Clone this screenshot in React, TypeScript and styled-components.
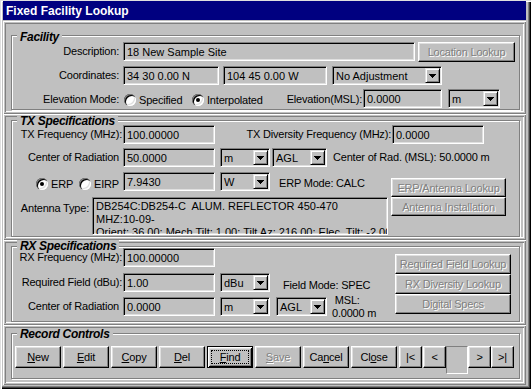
import React from 'react';
import styled, { createGlobalStyle } from 'styled-components';

const GlobalStyle = createGlobalStyle`
  html, body { margin: 0; padding: 0; background: #c0c0c0; }
  body {
    font-family: "Liberation Sans", Arial, sans-serif;
    font-size: 11px;
    color: #000;
  }
  * { box-sizing: border-box; }
`;

const Window = styled.div`
  width: 531px;
  height: 389px;
  background: #c0c0c0;
  padding: 1px 5px 4px 3px;
  display: flex;
  flex-direction: column;
  overflow: hidden;
  box-shadow: inset 1px 1px #dfdfdf, inset 2px 2px #fff, inset -1px -1px #000,
    inset -2px -2px #404040, inset -3px -3px #808080;
`;

const TitleBar = styled.div`
  height: 19px;
  flex-shrink: 0;
  background: #000080;
  color: #fff;
  font-weight: bold;
  font-size: 12px;
  line-height: 17px;
  padding: 2px 0 0 3px;
  white-space: nowrap;
`;

const Body = styled.div`
  display: flex;
  flex-direction: column;
  margin-top: 1px;
`;

const Panel = styled.div<{ $h: number; $pt: number; $pb: number }>`
  height: ${(p) => p.$h}px;
  padding: ${(p) => p.$pt}px 6px ${(p) => p.$pb}px 8px;
  display: flex;
  flex-direction: column;
  flex-shrink: 0;
  box-shadow: inset 1px 1px #fff, inset -1px -1px #808080, inset 2px 2px #c0c0c0,
    inset -2px -2px #c0c0c0, inset 3px 3px #808080, inset -3px -3px #fff;
`;

const GroupBox = styled.div<{ $pt: number }>`
  position: relative;
  flex: 1;
  border: 1px solid #808080;
  box-shadow: inset 1px 1px #fff, 1px 1px #fff;
  padding-top: ${(p) => p.$pt}px;
`;

const Legend = styled.span<{ $top?: number }>`
  position: absolute;
  top: ${(p) => p.$top ?? -6}px;
  left: 5px;
  padding: 0 3px;
  background: #c0c0c0;
  font-weight: bold;
  font-style: italic;
  font-size: 12px;
  line-height: 12px;
  letter-spacing: -0.3px;
  white-space: nowrap;
`;

const Row = styled.div<{ $h?: number; $mt?: number }>`
  display: flex;
  align-items: flex-start;
  height: ${(p) => p.$h ?? 19}px;
  margin-top: ${(p) => p.$mt ?? 0}px;
`;

const Split = styled.div<{ $mt?: number }>`
  display: flex;
  align-items: flex-start;
  margin-top: ${(p) => p.$mt ?? 0}px;
`;

const Column = styled.div<{ $w?: number; $ml?: number; $mt?: number }>`
  display: flex;
  flex-direction: column;
  flex-shrink: 0;
  ${(p) => (p.$w ? `width: ${p.$w}px;` : '')}
  margin-left: ${(p) => p.$ml ?? 0}px;
  margin-top: ${(p) => p.$mt ?? 0}px;
`;

const Label = styled.span<{ $w: number; $ml?: number; $pt?: number }>`
  width: ${(p) => p.$w}px;
  margin-left: ${(p) => p.$ml ?? 0}px;
  padding-top: ${(p) => p.$pt ?? 1}px;
  text-align: right;
  white-space: nowrap;
  line-height: 17px;
  flex-shrink: 0;
  letter-spacing: -0.2px;
`;

const Note = styled.span<{ $ml?: number; $dy?: number }>`
  margin-left: ${(p) => p.$ml ?? 0}px;
  margin-top: ${(p) => p.$dy ?? 0}px;
  padding-top: 1px;
  white-space: nowrap;
  line-height: 17px;
  flex-shrink: 0;
  letter-spacing: -0.2px;
`;

const StackNote = styled.span<{ $ml?: number; $dy?: number }>`
  margin-left: ${(p) => p.$ml ?? 0}px;
  margin-top: ${(p) => p.$dy ?? 0}px;
  display: flex;
  flex-direction: column;
  line-height: 13px;
  white-space: nowrap;
  letter-spacing: -0.2px;
`;

const sunken = `
  border: 1px solid;
  border-color: #808080 #fff #fff #808080;
  box-shadow: inset 1px 1px #000, inset -1px -1px #dfdfdf;
`;

const Field = styled.div<{ $w: number; $h?: number; $ml?: number }>`
  width: ${(p) => p.$w}px;
  height: ${(p) => p.$h ?? 19}px;
  margin-left: ${(p) => p.$ml ?? 0}px;
  flex-shrink: 0;
  background: #c0c0c0;
  ${sunken}
  padding: 1px 2px 0 3px;
  line-height: 17px;
  white-space: nowrap;
  overflow: hidden;
`;

const SelectBox = styled.div<{ $w: number; $ml?: number }>`
  width: ${(p) => p.$w}px;
  height: 19px;
  margin-left: ${(p) => p.$ml ?? 0}px;
  flex-shrink: 0;
  background: #c0c0c0;
  ${sunken}
  display: flex;
  align-items: flex-start;
  padding: 0 0 0 3px;
`;

const SelectText = styled.span`
  flex: 1;
  padding-top: 2px;
  line-height: 15px;
  white-space: nowrap;
  overflow: hidden;
`;

const DropBtn = styled.span`
  width: 15px;
  height: 15px;
  margin: 1px 1px 0 0;
  flex-shrink: 0;
  border: 1px solid;
  border-color: #dfdfdf #000 #000 #dfdfdf;
  box-shadow: inset 1px 1px #fff, inset -1px -1px #808080;
  background: #c0c0c0;
  display: flex;
  align-items: center;
  justify-content: center;
`;

const Memo = styled.div<{ $w: number; $h: number; $ml?: number }>`
  width: ${(p) => p.$w}px;
  height: ${(p) => p.$h}px;
  margin-left: ${(p) => p.$ml ?? 0}px;
  flex-shrink: 0;
  background: #c0c0c0;
  ${sunken}
  padding: 2px 2px 0 3px;
  line-height: 13px;
  overflow: hidden;
  white-space: pre;
`;

const NavField = styled.div<{ $w: number; $h: number }>`
  width: ${(p) => p.$w}px;
  height: ${(p) => p.$h}px;
  flex-shrink: 0;
  background: #c0c0c0;
  border: 1px solid;
  border-color: #808080 #fff #fff #808080;
`;

const Btn = styled.button<{ $w: number; $h: number; $ml?: number; $default?: boolean }>`
  font: inherit;
  letter-spacing: -0.2px;
  width: ${(p) => p.$w}px;
  height: ${(p) => p.$h}px;
  margin: 0 0 0 ${(p) => p.$ml ?? 0}px;
  padding: 0;
  flex-shrink: 0;
  background: #c0c0c0;
  color: #000;
  display: flex;
  align-items: stretch;
  justify-content: center;
  border: 1px solid;
  border-color: ${(p) => (p.$default ? '#000' : '#fff #000 #000 #fff')};
  box-shadow: ${(p) =>
    p.$default
      ? 'inset 1px 1px #fff, inset -1px -1px #000, inset 2px 2px #dfdfdf, inset -2px -2px #808080'
      : 'inset -1px -1px #808080, inset 1px 1px #dfdfdf'};
  &:disabled {
    color: #808080;
    text-shadow: 1px 1px #fff;
  }
`;

const BtnText = styled.span<{ $focus?: boolean }>`
  flex: 1;
  display: flex;
  align-items: center;
  justify-content: center;
  white-space: pre;
  margin: ${(p) => (p.$focus ? '3px' : '0')};
  border: ${(p) => (p.$focus ? '1px dotted #000' : 'none')};
`;

const Key = styled.span`
  text-decoration: underline;
`;

const RadioItem = styled.span<{ $w: number; $ml?: number; $dy?: number }>`
  width: ${(p) => p.$w}px;
  margin-left: ${(p) => p.$ml ?? 0}px;
  margin-top: ${(p) => p.$dy ?? 0}px;
  height: 19px;
  flex-shrink: 0;
  display: flex;
  align-items: center;
  gap: 3px;
  white-space: nowrap;
  letter-spacing: -0.2px;
  padding-top: 1px;
`;

const RadioDot = styled.span<{ $checked?: boolean }>`
  width: 12px;
  height: 12px;
  border-radius: 50%;
  background: #fff;
  flex-shrink: 0;
  display: flex;
  align-items: center;
  justify-content: center;
  box-shadow: inset 1px 1px #808080, inset 2px 2px #000, inset -1px -1px #fff,
    inset -2px -2px #dfdfdf;
  &::after {
    content: '';
    width: 4px;
    height: 4px;
    border-radius: 50%;
    background: ${(p) => (p.$checked ? '#000' : 'transparent')};
  }
`;

const Arrow = () => (
  <svg width="7" height="4" viewBox="0 0 7 4" shapeRendering="crispEdges">
    <path d="M0 0h7v1H0zM1 1h5v1H1zM2 2h3v1H2zM3 3h1v1H3z" fill="#000" />
  </svg>
);

const Select: React.FC<{ w: number; ml?: number; value: string }> = ({ w, ml, value }) => (
  <SelectBox $w={w} $ml={ml}>
    <SelectText>{value}</SelectText>
    <DropBtn>
      <Arrow />
    </DropBtn>
  </SelectBox>
);

const Radio: React.FC<{ w: number; ml?: number; dy?: number; checked?: boolean; label: string }> = ({
  w,
  ml,
  dy,
  checked,
  label,
}) => (
  <RadioItem $w={w} $ml={ml} $dy={dy}>
    <RadioDot $checked={checked} />
    {label}
  </RadioItem>
);

const Caption: React.FC<{ pre?: string; k: string; post: string }> = ({ pre, k, post }) => (
  <span>
    {pre}
    <Key>{k}</Key>
    {post}
  </span>
);

export default function App() {
  return (
    <>
      <GlobalStyle />
      <Window>
        <TitleBar>Fixed Facility Lookup</TitleBar>
        <Body>
          {/* Facility */}
          <Panel $h={93} $pt={14} $pb={4}>
            <GroupBox $pt={6}>
              <Legend $top={-5}>Facility</Legend>
              <Row $h={20}>
                <Label $w={107}>Description:</Label>
                <Field $w={292} $ml={4}>18 New Sample Site</Field>
                <Btn $w={97} $h={20} $ml={3} disabled>
                  <BtnText>Location Lookup</BtnText>
                </Btn>
              </Row>
              <Row $h={20} $mt={4}>
                <Label $w={107}>Coordinates:</Label>
                <Field $w={96} $ml={4}>34 30 0.00 N</Field>
                <Field $w={104} $ml={4}>104 45 0.00 W</Field>
                <Select w={110} ml={5} value="No Adjustment" />
              </Row>
              <Row $mt={3}>
                <Label $w={107} $pt={2}>Elevation Mode:</Label>
                <Radio w={68} ml={5} dy={1} label="Specified" />
                <Radio w={70} dy={1} checked label="Interpolated" />
                <Label $w={100} $pt={2}>Elevation(MSL):</Label>
                <Field $w={79} $ml={1}>0.0000</Field>
                <Select w={52} ml={6} value="m" />
              </Row>
            </GroupBox>
          </Panel>

          {/* TX Specifications */}
          <Panel $h={126} $pt={6} $pb={3}>
            <GroupBox $pt={4}>
              <Legend $top={-6}>TX Specifications</Legend>
              <Row>
                <Label $w={110}>TX Frequency (MHz):</Label>
                <Field $w={92} $ml={1}>100.00000</Field>
                <Label $w={176}>TX Diversity Frequency (MHz):</Label>
                <Field $w={92} $ml={1}>0.0000</Field>
              </Row>
              <Row $mt={4}>
                <Label $w={107}>Center of Radiation</Label>
                <Field $w={92} $ml={4}>50.0000</Field>
                <Select w={50} ml={5} value="m" />
                <Select w={55} ml={2} value="AGL" />
                <Note $ml={6}>Center of Rad. (MSL): 50.0000 m</Note>
              </Row>
              <Split $mt={5}>
                <Column $w={376}>
                  <Row>
                    <Radio w={43} ml={24} dy={2} checked label="ERP" />
                    <Radio w={44} dy={2} label="EIRP" />
                    <Field $w={92}>7.9430</Field>
                    <Select w={50} ml={5} value="W" />
                    <Note $ml={9} $dy={2}>ERP Mode: CALC</Note>
                  </Row>
                  <Row $h={38} $mt={6}>
                    <Label $w={77} $pt={3}>Antenna Type:</Label>
                    <Memo $w={296} $h={38} $ml={3}>
                      <div>DB254C:DB254-C  ALUM. REFLECTOR 450-470</div>
                      <div>MHZ:10-09-</div>
                      <div>Orient: 36.00; Mech Tilt: 1.00; Tilt Az: 216.00; Elec. Tilt: -2.00</div>
                    </Memo>
                  </Row>
                </Column>
                <Column $ml={3} $mt={6}>
                  <Btn $w={115} $h={19} disabled>
                    <BtnText>ERP/Antenna Lookup</BtnText>
                  </Btn>
                  <Btn $w={115} $h={19} disabled>
                    <BtnText>Antenna Installation</BtnText>
                  </Btn>
                </Column>
              </Split>
            </GroupBox>
          </Panel>

          {/* RX Specifications */}
          <Panel $h={85} $pt={6} $pb={3}>
            <GroupBox $pt={1}>
              <Legend $top={-7}>RX Specifications</Legend>
              <Split>
                <Column $w={383}>
                  <Row>
                    <Label $w={110}>RX Frequency (MHz):</Label>
                    <Field $w={92} $ml={1}>100.00000</Field>
                  </Row>
                  <Row $mt={6}>
                    <Label $w={110}>Required Field (dBu):</Label>
                    <Field $w={92} $ml={1}>1.00</Field>
                    <Select w={50} ml={5} value="dBu" />
                    <Note $ml={13} $dy={3}>Field Mode: SPEC</Note>
                  </Row>
                  <Row $mt={5}>
                    <Label $w={107}>Center of Radiation</Label>
                    <Field $w={92} $ml={4}>0.0000</Field>
                    <Select w={50} ml={5} value="m" />
                    <Select w={51} ml={6} value="AGL" />
                    <StackNote $ml={5} $dy={-3}>
                      <span>{'\u00a0MSL:'}</span>
                      <span>0.0000 m</span>
                    </StackNote>
                  </Row>
                </Column>
                <Column $mt={6}>
                  <Btn $w={116} $h={20} disabled>
                    <BtnText>Required Field Lookup</BtnText>
                  </Btn>
                  <Btn $w={116} $h={20} disabled>
                    <BtnText>RX Diversity Lookup</BtnText>
                  </Btn>
                  <Btn $w={116} $h={20} disabled>
                    <BtnText>Digital Specs</BtnText>
                  </Btn>
                </Column>
              </Split>
            </GroupBox>
          </Panel>

          {/* Record Controls */}
          <Panel $h={60} $pt={8} $pb={6}>
            <GroupBox $pt={12}>
              <Legend $top={-6}>Record Controls</Legend>
              <Row $h={22}>
                <Btn $w={46} $h={22} $ml={3}>
                  <BtnText><Caption k="N" post="ew" /></BtnText>
                </Btn>
                <Btn $w={46} $h={22} $ml={2}>
                  <BtnText><Caption k="E" post="dit" /></BtnText>
                </Btn>
                <Btn $w={46} $h={22} $ml={2}>
                  <BtnText><Caption k="C" post="opy" /></BtnText>
                </Btn>
                <Btn $w={46} $h={22} $ml={2}>
                  <BtnText><Caption k="D" post="el" /></BtnText>
                </Btn>
                <Btn $w={46} $h={22} $ml={2} $default>
                  <BtnText $focus><Caption k="F" post="ind" /></BtnText>
                </Btn>
                <Btn $w={46} $h={22} $ml={2} disabled>
                  <BtnText><Caption k="S" post="ave" /></BtnText>
                </Btn>
                <Btn $w={46} $h={22} $ml={2}>
                  <BtnText><Caption pre="Ca" k="n" post="cel" /></BtnText>
                </Btn>
                <Btn $w={46} $h={22} $ml={2}>
                  <BtnText><Caption pre="Cl" k="o" post="se" /></BtnText>
                </Btn>
                <Btn $w={23} $h={22} $ml={2}>
                  <BtnText>|&lt;</BtnText>
                </Btn>
                <Btn $w={23} $h={22} $ml={1}>
                  <BtnText>&lt;</BtnText>
                </Btn>
                <NavField $w={22} $h={28} />
                <Btn $w={23} $h={22}>
                  <BtnText>&gt;</BtnText>
                </Btn>
                <Btn $w={23} $h={22}>
                  <BtnText>&gt;|</BtnText>
                </Btn>
              </Row>
            </GroupBox>
          </Panel>
        </Body>
      </Window>
    </>
  );
}
